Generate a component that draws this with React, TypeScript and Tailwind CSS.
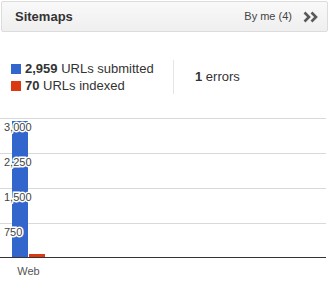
import React from 'react';

const gridLines = [0.5, 35.5, 70.5, 105.5];
const labels = [
  { text: '3,000', y: 13 },
  { text: '2,250', y: 48 },
  { text: '1,500', y: 83 },
  { text: '750', y: 118 },
];

const App: React.FC = () => {
  return (
    <div className="w-[329px] h-[293px] bg-white font-['Liberation_Sans',Arial,sans-serif] text-[#333] overflow-hidden">
      {/* Header */}
      <div className="mx-[1px] mt-[1px] h-[31px] border border-[#dcdcdc] rounded-[2px] bg-gradient-to-b from-[#f9f9f9] to-[#efefef] flex items-center justify-between pl-[13px] pr-[9px]">
        <span className="text-[13px] font-bold text-[#333]">Sitemaps</span>
        <div className="flex items-center gap-[11px]">
          <span className="text-[11px] text-[#444]">By me (4)</span>
          <svg width="15" height="12" viewBox="0 0 15 12">
            <path d="M1.5 1.5 L6 6 L1.5 10.5 M8.5 1.5 L13 6 L8.5 10.5" fill="none" stroke="#595959" strokeWidth="2.6" />
          </svg>
        </div>
      </div>

      {/* Stats */}
      <div className="h-[86px] pt-[28px] flex items-start">
        <div className="w-[173px] pl-[11px] text-[13px] leading-[17px]">
          <div className="flex items-center">
            <span className="w-[10px] h-[10px] bg-[#3366cc] mr-[4px]" />
            <span><b>2,959</b> URLs submitted</span>
          </div>
          <div className="flex items-center">
            <span className="w-[10px] h-[10px] bg-[#dc3912] mr-[4px]" />
            <span><b>70</b> URLs indexed</span>
          </div>
        </div>
        <div className="h-[34px] border-l border-[#e5e5e5] pl-[21px] flex items-center text-[13px]">
          <span><b>1</b> errors</span>
        </div>
      </div>

      {/* Chart */}
      <svg width="329" height="175" viewBox="0 0 329 175" className="block">
        {gridLines.map((y) => (
          <line key={y} x1="0" x2="326" y1={y} y2={y} stroke="#d9d9d9" strokeWidth="1" />
        ))}
        <rect x="12" y="3" width="16" height="136" fill="#3366cc" />
        <rect x="29" y="136" width="16" height="3" fill="#dc3912" />
        <line x1="0" x2="326" y1="139.5" y2="139.5" stroke="#333" strokeWidth="1" />
        {labels.map((l) => (
          <text
            key={l.text}
            x="4"
            y={l.y}
            fontSize="11"
            fill="#444"
            stroke="#fff"
            strokeWidth="3"
            paintOrder="stroke"
            fontFamily="'Liberation Sans', Arial, sans-serif"
          >
            {l.text}
          </text>
        ))}
        <text x="28.5" y="157" fontSize="11" fill="#555" textAnchor="middle" fontFamily="'Liberation Sans', Arial, sans-serif">
          Web
        </text>
      </svg>
    </div>
  );
};

export default App;
